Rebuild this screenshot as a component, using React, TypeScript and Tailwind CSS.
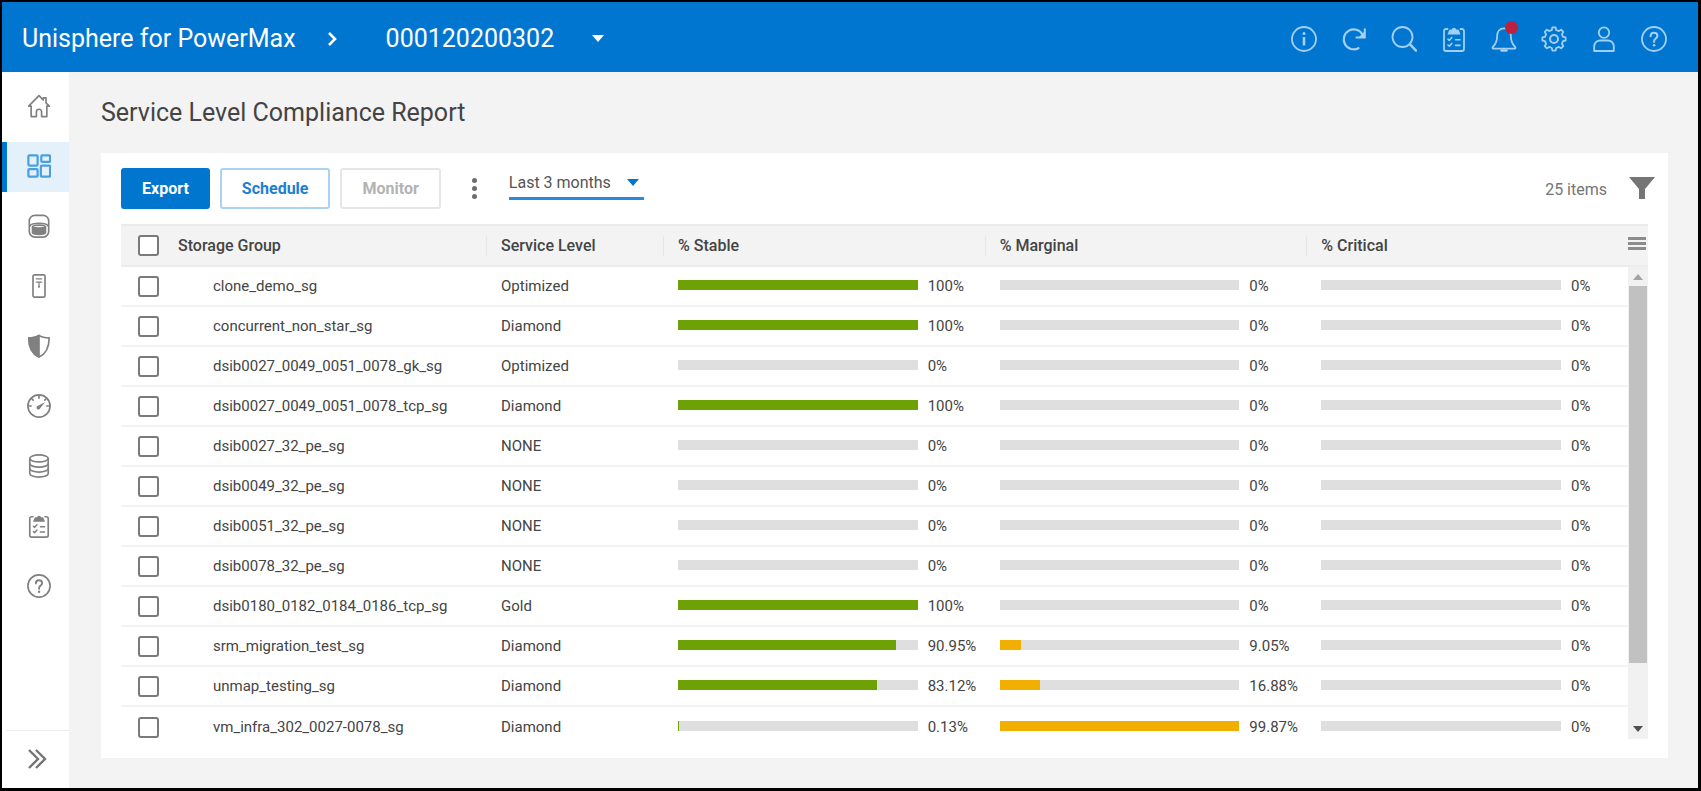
import type { ComponentType, ReactNode } from "react";
import clsx from "clsx";

interface IconProps {
  className?: string;
}

interface SvgProps extends IconProps {
  children: ReactNode;
}

const Svg = ({ className, children }: SvgProps) => (
  <svg
    viewBox="0 0 26 26"
    fill="none"
    stroke="currentColor"
    strokeWidth={1.8}
    strokeLinecap="round"
    strokeLinejoin="round"
    aria-hidden="true"
    className={className}
  >
    {children}
  </svg>
);

const InfoIcon = ({ className }: IconProps) => (
  <Svg className={className}>
    <circle cx="13" cy="13" r="12" />
    <path d="M13 11v8.5" strokeWidth={2.6} strokeLinecap="butt" />
    <circle cx="13" cy="7.600" r="1.500" fill="currentColor" stroke="none" />
  </Svg>
);

const RefreshIcon = ({ className }: IconProps) => (
  <Svg className={className}>
    <path d="M17.500 22.200A10 10 0 1 1 21.500 8.500" strokeWidth={2.200} />
    <path d="M23.800 3.200v8.300h-8.400" strokeWidth={2} strokeLinejoin="miter" />
    <path d="M17.500 11.500l6.300-6.300v6.300z" fill="currentColor" stroke="none" />
  </Svg>
);

const SearchIcon = ({ className }: IconProps) => (
  <Svg className={className}>
    <circle cx="11.500" cy="11" r="10" />
    <path d="M18.800 18.200L25 24.600" strokeWidth={2.400} />
  </Svg>
);

const ClipboardIcon = ({ className }: IconProps) => (
  <Svg className={className}>
    <path d="M6.500 3H5a2 2 0 0 0-2 2v18a2 2 0 0 0 2 2h16a2 2 0 0 0 2-2V5a2 2 0 0 0-2-2h-1.500" />
    <path
      d="M6.500 8.500l1.500-4q.4-1 1.500-1h1.300a2.300 2.300 0 0 1 4.400 0h1.300q1.100 0 1.500 1l1.500 4z"
      fill="currentColor"
      stroke="none"
    />
    <path d="M7 13.200l1.300 1.300 2.500-2.900M7 19l1.300 1.300 2.500-2.900M14.500 13.800h4.500M14.500 19.400h4.500" strokeWidth={1.600} />
  </Svg>
);

const BellIcon = ({ className }: IconProps) => (
  <Svg className={className}>
    <path d="M13 2.400c-4.400 0-6.800 3.200-6.800 7.400 0 5.200-1.200 8.200-4.400 11.200-.6.700-.3 1.600.7 1.600h21c1 0 1.300-.9.700-1.600-3.200-3-4.400-6-4.400-11.200 0-4.200-2.400-7.400-6.800-7.400z" />
    <path d="M10.500 24.500h5" strokeWidth={2.400} />
  </Svg>
);

const GearIcon = ({ className }: IconProps) => (
  <Svg className={className}>
    <path d="M10.800 4L11.400 1.400h3.200L15.200 4l2.600 1.100 2.300-1.400 2.200 2.200-1.400 2.300L22 10.800l2.600.6v3.200l-2.600.6-1.100 2.600 1.400 2.300-2.200 2.200-2.300-1.400-2.600 1.100-.6 2.600h-3.200l-.6-2.600-2.600-1.100-2.300 1.400-2.200-2.200 1.400-2.300L4 15.200l-2.600-.6v-3.200l2.600-.6 1.100-2.600-1.400-2.300 2.200-2.200 2.300 1.400z" />
    <circle cx="13" cy="13" r="4" strokeWidth={2} />
  </Svg>
);

const UserIcon = ({ className }: IconProps) => (
  <Svg className={className}>
    <circle cx="13" cy="6.600" r="5.200" />
    <path d="M3.200 25v-4.500c0-3.400 2.600-6 6-6h7.600c3.400 0 6 2.600 6 6V25z" />
  </Svg>
);

const HelpIcon = ({ className }: IconProps) => (
  <Svg className={className}>
    <circle cx="13" cy="13" r="12" />
    <path d="M9.600 10.200c0-2 1.400-3.400 3.400-3.400s3.400 1.300 3.400 3.100c0 2.400-3.300 2.700-3.300 5.200v.9" strokeWidth={2} />
    <circle cx="13.100" cy="19.200" r="1.300" fill="currentColor" stroke="none" />
  </Svg>
);

const HomeIcon = ({ className }: IconProps) => (
  <Svg className={className}>
    <path d="M4.500 13.200H1.800L13 1.800l4.600 4.700V4.200h3v5.400l3.600 3.600h-2.700V24.500H15.800v-5.200a2.800 2.800 0 0 0-5.600 0v5.200H4.500z" />
  </Svg>
);

const DashboardIcon = ({ className }: IconProps) => (
  <Svg className={className}>
    <g strokeWidth={2.400}>
      <rect x="1.500" y="1.500" width="10" height="11" rx="1" />
      <rect x="15.500" y="1.500" width="9.500" height="7" rx="1" />
      <rect x="1.500" y="16.500" width="10" height="8" rx="1" />
      <rect x="15" y="12.500" width="10" height="12" rx="1" />
    </g>
  </Svg>
);

const StorageIcon = ({ className }: IconProps) => (
  <Svg className={className}>
    <rect x="2.500" y="1.500" width="21" height="23.500" rx="6" />
    <path d="M3 13c1.500-2.500 5-3 10-3s8.500.5 10 3" />
    <path d="M6 14c2 1.500 12 1.500 14 0v6.500c-2 2-12 2-14 0z" fill="currentColor" />
    <path d="M6 14c0-2.500 14-2.500 14 0" />
  </Svg>
);

const ServerIcon = ({ className }: IconProps) => (
  <Svg className={className}>
    <rect x="6.500" y="1" width="13" height="24" rx="1.500" />
    <path d="M10 5.200h6M10 8.800h6M13 8.800v5" strokeWidth={1.300} />
    <circle cx="13" cy="13.800" r="1.100" fill="currentColor" stroke="none" />
  </Svg>
);

const ShieldIcon = ({ className }: IconProps) => (
  <Svg className={className}>
    <path d="M13 1.500c3 2 6.500 2.700 11 2.700 0 9.500-2.500 16.800-11 20.800C4.500 21 2 13.700 2 4.200c4.500 0 8-.7 11-2.700z" />
    <path d="M13 1.500V25C4.500 21 2 13.700 2 4.200c4.500 0 8-.7 11-2.700z" fill="currentColor" />
  </Svg>
);

const GaugeIcon = ({ className }: IconProps) => (
  <Svg className={className}>
    <circle cx="13" cy="13" r="12" />
    <path d="M13 1.500v3M1.500 13h3M21.500 13h3M4.900 4.900l1.800 1.800M21.100 4.900l-1.800 1.800" />
    <path d="M19.500 9l-5.400 6.700a2 2 0 1 1-2.800-2.600z" fill="currentColor" stroke="none" />
  </Svg>
);

const DatabaseIcon = ({ className }: IconProps) => (
  <Svg className={className}>
    <ellipse cx="13" cy="4.800" rx="10" ry="3.800" />
    <path d="M3 5v16c0 2.200 4.500 4 10 4s10-1.800 10-4V5" />
    <path d="M3 10.300c0 2.200 4.500 4 10 4s10-1.800 10-4M3 15.700c0 2.200 4.500 4 10 4s10-1.800 10-4" />
  </Svg>
);

const FilterIcon = ({ className }: IconProps) => (
  <svg viewBox="0 0 26 24" fill="currentColor" aria-hidden="true" className={className}>
    <path d="M0 1h26l-10 12v10h-6V13z" />
  </svg>
);

const CaretIcon = ({ className }: IconProps) => (
  <svg viewBox="0 0 12 7" fill="currentColor" aria-hidden="true" className={className}>
    <path d="M0 0h12L6 7z" />
  </svg>
);

interface Action {
  label: string;
  icon: ComponentType<IconProps>;
  alert?: boolean;
  active?: boolean;
}

const headerActions: Action[] = [
  { label: "Info", icon: InfoIcon },
  { label: "Refresh", icon: RefreshIcon },
  { label: "Search", icon: SearchIcon },
  { label: "Jobs", icon: ClipboardIcon },
  { label: "Alerts", icon: BellIcon, alert: true },
  { label: "Settings", icon: GearIcon },
  { label: "User", icon: UserIcon },
  { label: "Help", icon: HelpIcon },
];

const navItems: Action[] = [
  { label: "Home", icon: HomeIcon },
  { label: "Dashboard", icon: DashboardIcon, active: true },
  { label: "Storage", icon: StorageIcon },
  { label: "Hosts", icon: ServerIcon },
  { label: "Data Protection", icon: ShieldIcon },
  { label: "Performance", icon: GaugeIcon },
  { label: "Databases", icon: DatabaseIcon },
  { label: "Events", icon: ClipboardIcon },
  { label: "Support", icon: HelpIcon },
];

interface StorageGroup {
  name: string;
  level: string;
  stable: number;
  marginal: number;
  critical: number;
}

const groups: StorageGroup[] = [
  { name: "clone_demo_sg", level: "Optimized", stable: 100, marginal: 0, critical: 0 },
  { name: "concurrent_non_star_sg", level: "Diamond", stable: 100, marginal: 0, critical: 0 },
  { name: "dsib0027_0049_0051_0078_gk_sg", level: "Optimized", stable: 0, marginal: 0, critical: 0 },
  { name: "dsib0027_0049_0051_0078_tcp_sg", level: "Diamond", stable: 100, marginal: 0, critical: 0 },
  { name: "dsib0027_32_pe_sg", level: "NONE", stable: 0, marginal: 0, critical: 0 },
  { name: "dsib0049_32_pe_sg", level: "NONE", stable: 0, marginal: 0, critical: 0 },
  { name: "dsib0051_32_pe_sg", level: "NONE", stable: 0, marginal: 0, critical: 0 },
  { name: "dsib0078_32_pe_sg", level: "NONE", stable: 0, marginal: 0, critical: 0 },
  { name: "dsib0180_0182_0184_0186_tcp_sg", level: "Gold", stable: 100, marginal: 0, critical: 0 },
  { name: "srm_migration_test_sg", level: "Diamond", stable: 90.95, marginal: 9.05, critical: 0 },
  { name: "unmap_testing_sg", level: "Diamond", stable: 83.12, marginal: 16.88, critical: 0 },
  { name: "vm_infra_302_0027-0078_sg", level: "Diamond", stable: 0.13, marginal: 99.87, critical: 0 },
];

const Checkbox = ({ label }: { label: string }) => (
  <input
    type="checkbox"
    aria-label={label}
    className="block size-[21px] appearance-none rounded-[3px] border-2 border-[#7a7a7a] bg-white checked:bg-[#0076ce]"
  />
);

const PercentBar = ({ value, color }: { value: number; color: string }) => (
  <div className="flex items-center gap-[10px] pl-[15px]">
    <div className="mb-[2px] h-[10px] flex-1 bg-[#dfdfdf]">
      <div className={clsx("h-full", color)} style={{ width: `${value}%` }} />
    </div>
    <span className="w-[57px]">{value}%</span>
  </div>
);

const HeadCell = ({ children }: { children: ReactNode }) => (
  <div className="flex h-5 items-center border-l border-[#e6e6e6] pl-[14px]">{children}</div>
);

export default function App() {
  return (
    <div
      className="flex min-h-screen flex-col border-2 border-r-[3px] border-b-[3px] border-black bg-[#f3f3f3] text-[#444]"
      style={{ fontFamily: 'Roboto, "Liberation Sans", sans-serif' }}
    >
      <header className="flex h-[70px] items-center justify-between bg-[#0076d0] pt-[3px] pr-[31px] pl-5 text-white">
        <div className="flex items-center text-[25px]">
          <span>Unisphere for PowerMax</span>
          <svg viewBox="0 0 10 14" fill="none" stroke="currentColor" strokeWidth={2.6} className="ml-[31px] h-[14px] w-[10px]" aria-hidden="true">
            <path d="M2 1l6 6-6 6" />
          </svg>
          <button type="button" className="ml-[49px] flex items-center gap-[38px]">
            000120200302
            <CaretIcon className="h-[7px] w-3" />
          </button>
        </div>
        <div className="flex items-center gap-6 text-[#a3d0f2]">
          {headerActions.map(({ label, icon: Icon, alert }) => (
            <button key={label} type="button" aria-label={label} className="relative">
              <Icon className="size-[26px]" />
              {alert ? <span className="absolute -top-[5px] -right-[1px] size-[13px] rounded-full bg-[#bb2240]" /> : null}
            </button>
          ))}
        </div>
      </header>

      <div className="flex flex-1">
        <nav className="flex w-[67px] shrink-0 flex-col justify-between bg-white" aria-label="Main">
          <div className="flex flex-col gap-[10px] pt-[10px]">
            {navItems.map(({ label, icon: Icon, active }) => (
              <a
                key={label}
                href="#"
                aria-label={label}
                aria-current={active ? "page" : undefined}
                className={clsx(
                  "flex h-[50px] items-center justify-center border-l-[5px] pb-[2px] pl-[2px]",
                  active ? "border-[#0076ce] bg-[#e5f1fa] text-[#4a9fdf]" : "border-transparent text-[#808080]",
                )}
              >
                <Icon className="size-6" />
              </a>
            ))}
          </div>
          <button type="button" aria-label="Expand menu" className="ml-1 flex h-[58px] items-center border-t border-[#ececec] pb-[2px] pl-[22px] text-[#757575]">
            <svg viewBox="0 0 20 20" fill="none" stroke="currentColor" strokeWidth={2.4} className="size-5" aria-hidden="true">
              <path d="M1 1l9 9-9 9M8 1l9 9-9 9" />
            </svg>
          </button>
        </nav>

        <main className="min-w-0 flex-1 pr-[30px] pb-[29px] pl-8">
          <h1 className="pt-[25px] text-[25px] leading-8">Service Level Compliance Report</h1>

          <section className="mt-6 bg-white px-5 pb-[11px]">
            <div className="flex items-start justify-between py-[15px]">
              <div className="flex items-center text-base font-bold">
                <button type="button" className="h-[41px] rounded-[3px] bg-[#0076ce] px-[21px] text-white">
                  Export
                </button>
                <button type="button" className="ml-[10px] h-[41px] rounded-[3px] border-2 border-[#a9d3f1] px-5 text-[#1a80d4]">
                  Schedule
                </button>
                <button type="button" disabled className="ml-[10px] h-[41px] rounded-[3px] border-2 border-[#e6e6e6] px-5 text-[#b3b3b3]">
                  Monitor
                </button>
                <button type="button" aria-label="More actions" className="ml-[31px] flex h-[41px] w-[5px] flex-col items-center justify-center gap-[3px]">
                  <span className="size-[5px] rounded-full bg-[#6e6e6e]" />
                  <span className="size-[5px] rounded-full bg-[#6e6e6e]" />
                  <span className="size-[5px] rounded-full bg-[#6e6e6e]" />
                </button>
                <div className="relative ml-8 self-start">
                  <select
                    aria-label="Time range"
                    className="block h-8 w-[135px] appearance-none border-b-[3px] border-[#2a8ad8] bg-transparent font-normal text-[#555] outline-none"
                  >
                    <option>Last 3 months</option>
                  </select>
                  <CaretIcon className="pointer-events-none absolute top-[11px] right-[5px] h-[7px] w-3 text-[#0076ce]" />
                </div>
              </div>
              <div className="flex items-center gap-[22px] pt-[6px] text-[#757575]">
                <span className="pt-1">25 items</span>
                <button type="button" aria-label="Filter" className="-mr-[7px]">
                  <FilterIcon className="block h-6 w-[26px]" />
                </button>
              </div>
            </div>

            <table className="w-full table-fixed border-separate border-spacing-0 text-left text-[15px]">
              <thead>
                <tr className="h-[43px] bg-[#f3f3f3] text-base *:border-y-2 *:border-[#e9ebec] *:font-medium">
                  <th className="w-[57px] pl-[17px]">
                    <Checkbox label="Select all" />
                  </th>
                  <th className="w-[308px]">Storage Group</th>
                  <th className="w-[177px]"><HeadCell>Service Level</HeadCell></th>
                  <th><HeadCell>% Stable</HeadCell></th>
                  <th><HeadCell>% Marginal</HeadCell></th>
                  <th><HeadCell>% Critical</HeadCell></th>
                  <th className="w-5 pb-1">
                    <button type="button" aria-label="Columns" className="flex w-[18px] flex-col gap-[2px]">
                      <span className="h-[3px] bg-[#8c8c8c]" />
                      <span className="h-[3px] bg-[#8c8c8c]" />
                      <span className="h-[3px] bg-[#8c8c8c]" />
                    </button>
                  </th>
                </tr>
              </thead>
              <tbody>
                {groups.map((group, index) => (
                  <tr key={group.name} className="h-10 *:border-b-2 *:border-[#f3f3f3] last:*:border-b-0">
                    <td className="pl-[17px]">
                      <Checkbox label={`Select ${group.name}`} />
                    </td>
                    <td className="pl-[35px]">{group.name}</td>
                    <td className="pl-[15px]">{group.level}</td>
                    <td><PercentBar value={group.stable} color="bg-[#6ea204]" /></td>
                    <td><PercentBar value={group.marginal} color="bg-[#f2af00]" /></td>
                    <td><PercentBar value={group.critical} color="bg-[#ce1126]" /></td>
                    {index === 0 ? (
                      <td rowSpan={groups.length} className="h-px border-b-0! pb-2">
                        <div className="flex h-full flex-col items-center bg-[#f1f1f1] py-[7px]">
                          <svg viewBox="0 0 10 6" fill="#a3a3a3" className="h-[6px] w-[10px]" aria-hidden="true">
                            <path d="M5 0l5 6H0z" />
                          </svg>
                          <div className="mt-[6px] w-[18px] flex-6 bg-[#c1c1c1]" />
                          <div className="flex-1" />
                          <svg viewBox="0 0 10 6" fill="#505050" className="h-[6px] w-[10px]" aria-hidden="true">
                            <path d="M0 0h10L5 6z" />
                          </svg>
                        </div>
                      </td>
                    ) : null}
                  </tr>
                ))}
              </tbody>
            </table>
          </section>
        </main>
      </div>
    </div>
  );
}
